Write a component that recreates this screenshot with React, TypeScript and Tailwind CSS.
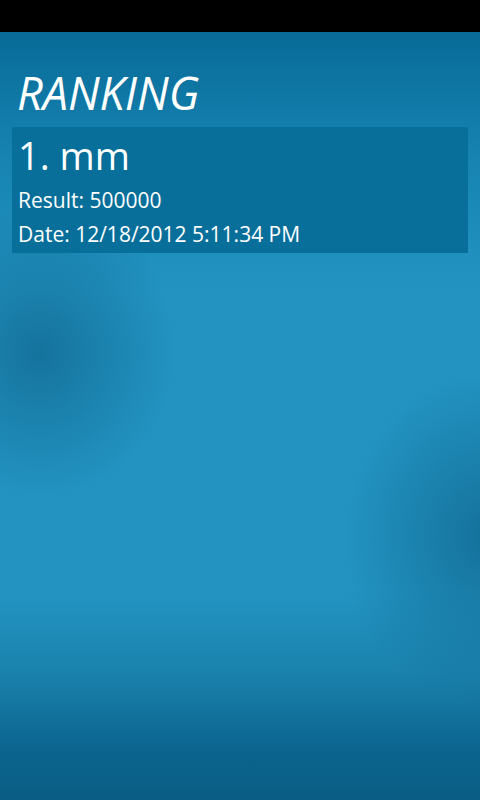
export default function App() {
  return (
    <div className="w-[480px] h-[800px] flex flex-col bg-black font-['Open_Sans','Noto_Sans',sans-serif] text-white overflow-hidden">
      <div className="h-8 shrink-0 bg-black" />
      <main className="flex-1 flex flex-col px-3 pt-[36px] bg-[radial-gradient(ellipse_140px_150px_at_40px_320px,rgba(16,104,145,0.75),rgba(16,104,145,0)),radial-gradient(ellipse_150px_170px_at_490px_505px,rgba(16,104,145,0.8),rgba(16,104,145,0)),linear-gradient(to_bottom,#086b98_0px,#1784b2_130px,#2394c2_260px,#2394c2_560px,#1a82ad_640px,#0b648e_720px,#095d84_768px)]">
        <h1 className="pl-[5px] text-[45px] leading-[50px] italic font-normal">RANKING</h1>
        <section className="mt-[9px] bg-[#076f9a] h-[126px] px-[6px] pt-[4px]">
          <div className="text-[38px] leading-[48px]">1. mm</div>
          <div className="text-[21px] leading-[34px] mt-[4px]">Result: 500000</div>
          <div className="text-[21px] leading-[34px]">Date: 12/18/2012 5:11:34 PM</div>
        </section>
      </main>
    </div>
  );
}
